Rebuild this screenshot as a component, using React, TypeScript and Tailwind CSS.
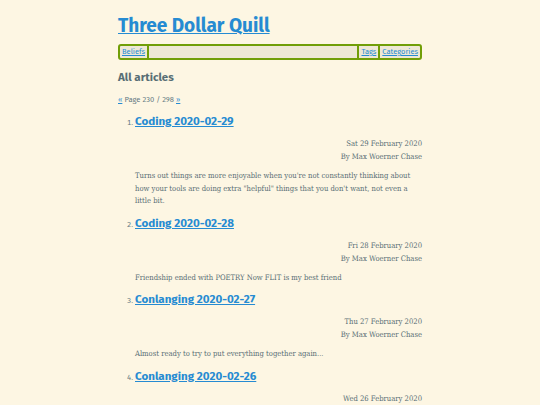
import React from "react";

const items = [
  {
    title: "Coding 2020-02-29",
    date: "Sat 29 February 2020",
    desc: "Turns out things are more enjoyable when you're not constantly thinking about how your tools are doing extra \"helpful\" things that you don't want, not even a little bit.",
  },
  {
    title: "Coding 2020-02-28",
    date: "Fri 28 February 2020",
    desc: "Friendship ended with POETRY Now FLIT is my best friend",
  },
  {
    title: "Conlanging 2020-02-27",
    date: "Thu 27 February 2020",
    desc: "Almost ready to try to put everything together again...",
  },
  {
    title: "Conlanging 2020-02-26",
    date: "Wed 26 February 2020",
    desc: "",
  },
];

const sans = "font-['Fira_Sans','Noto_Sans',sans-serif]";
const serif = "font-['Roboto_Slab','DejaVu_Serif_Condensed','DejaVu_Serif',serif]";

export default function App() {
  return (
    <div className="min-h-[405px] w-[540px] bg-[#fdf6e3] text-[#657b83]">
      <div className="mx-auto w-[304px] pt-[14px]">
        <h1 className={`${sans} text-[19px] font-bold leading-[24px]`}>
          <a href="#" className="text-[#268bd2] underline">Three Dollar Quill</a>
        </h1>
        <nav className={`${sans} mt-[6px] flex h-[16px] items-center rounded-[3px] border-2 border-[#719e07] bg-[#eee8d5] text-[7.5px] leading-[12px]`}>
          <a href="#" className="border-r-2 border-[#719e07] px-[2px] text-[#268bd2] underline">Beliefs</a>
          <div className="flex-1" />
          <a href="#" className="border-l-2 border-[#719e07] px-[2px] text-[#268bd2] underline">Tags</a>
          <a href="#" className="border-l-2 border-[#719e07] px-[2px] text-[#268bd2] underline">Categories</a>
        </nav>
        <h2 className={`${sans} mt-[8px] text-[11.5px] font-bold leading-[18px] text-[#586e75]`}>All articles</h2>
        <p className={`${sans} mt-[8px] text-[7.6px] leading-[12px]`}>
          <a href="#" className="text-[#268bd2] underline">«</a> Page 230 / 298 <a href="#" className="text-[#268bd2] underline">»</a>
        </p>
        <ol className="mt-[5px] list-decimal pl-[17px]">
          {items.map((it) => (
            <li key={it.title} className={`${sans} text-[7.5px] marker:text-[#657b83]`}>
              <h3 className="text-[11.6px] font-bold leading-[20px]">
                <a href="#" className="text-[#268bd2] underline">{it.title}</a>
              </h3>
              <div className={`${serif} mt-[6px] text-right text-[7.6px] leading-[13px] text-[#586e75]`}>
                <div>{it.date}</div>
                <div>By Max Woerner Chase</div>
              </div>
              {it.desc && (
                <p className={`${serif} mt-[7px] text-[7.6px] leading-[12.5px] text-[#586e75]`}>{it.desc}</p>
              )}
              <div className="h-[5px]" />
            </li>
          ))}
        </ol>
      </div>
    </div>
  );
}
